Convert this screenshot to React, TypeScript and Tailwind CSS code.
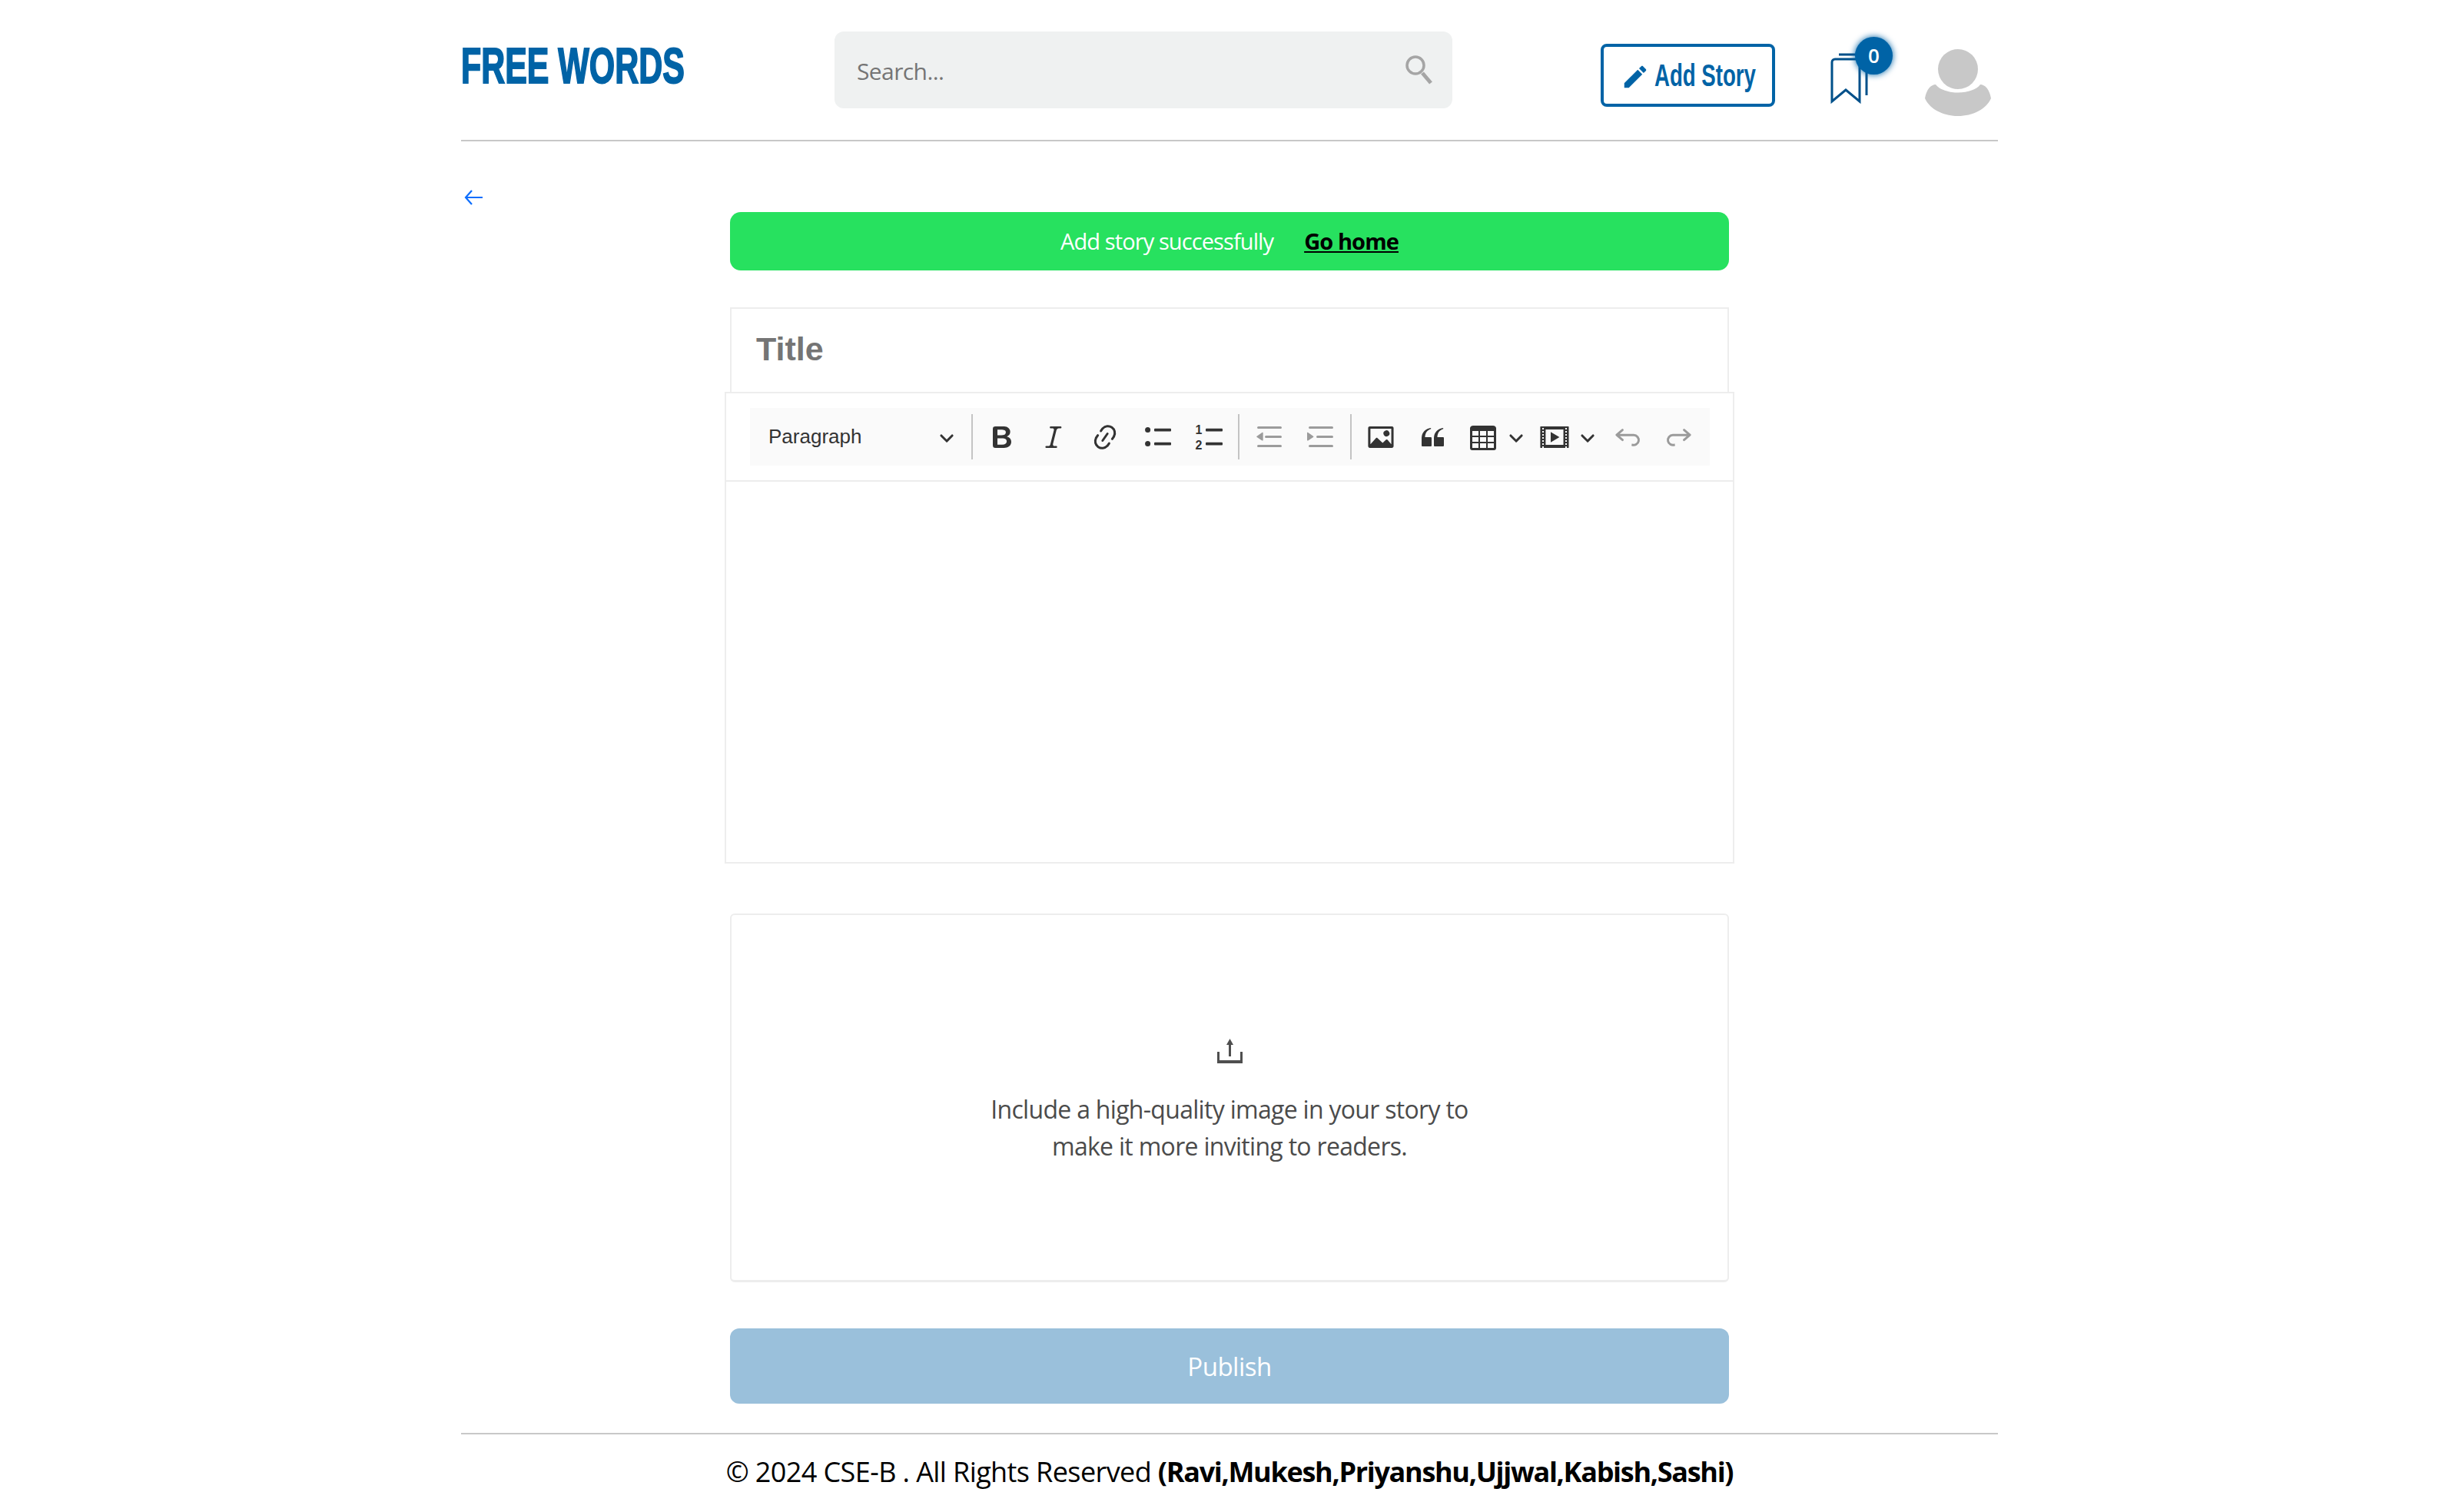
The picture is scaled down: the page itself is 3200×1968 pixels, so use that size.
import React from "react";

const BODY_FONT = "font-['Open_Sans',sans-serif]";

const Icon: React.FC<{ d: string; className?: string; children?: React.ReactNode }> = ({ d, className, children }) => (
  <svg viewBox="0 0 20 20" className={className ?? "w-[40px] h-[40px]"} fill="currentColor">
    <path d={d} fillRule="evenodd" />
    {children}
  </svg>
);

const Chevron: React.FC = () => (
  <svg viewBox="0 0 10 10" className="w-[20px] h-[20px]" fill="#333333">
    <path d="M.941 4.523a.75.75 0 1 1 1.06-1.06l3.006 3.005 3.005-3.005a.75.75 0 1 1 1.06 1.06l-3.549 3.55a.75.75 0 0 1-1.168-.136L.941 4.523z" />
  </svg>
);

const ToolButton: React.FC<{ children: React.ReactNode; muted?: boolean }> = ({ children, muted }) => (
  <button
    type="button"
    className={[
      "w-[67px] h-[60px] flex items-center justify-center shrink-0",
      muted ? "text-[#9b9b9b]" : "text-[#333333]",
    ].join(" ")}
  >
    {children}
  </button>
);

const Separator: React.FC<{ className?: string }> = ({ className }) => (
  <span className={["w-[2px] h-[59px] bg-[#c4c4c4] shrink-0", className ?? ""].join(" ")} />
);

const Toolbar: React.FC = () => (
  <div className="h-[117px] border-2 border-[#ededed] flex items-center pl-[31px]">
    <div className="w-[1249px] h-[75px] bg-[#fafafa] flex items-center">
      <div className="w-[288px] flex items-center justify-between pl-[24px] pr-[22px] text-[#333333] font-['Liberation_Sans',sans-serif] text-[26px]">
        <span>Paragraph</span>
        <Chevron />
      </div>
      <Separator className="mr-[4px]" />
      <ToolButton>
        <Icon d="M10.187 17H5.773c-.637 0-1.092-.138-1.364-.415-.273-.277-.409-.718-.409-1.323V4.738c0-.617.14-1.062.419-1.332.279-.27.73-.406 1.354-.406h4.68c.69 0 1.288.041 1.793.124.506.083.96.242 1.36.478.341.197.644.447.906.75a3.262 3.262 0 0 1 .808 2.162c0 1.401-.722 2.426-2.167 3.075C15.05 10.175 16 11.315 16 13.01a3.756 3.756 0 0 1-2.296 3.504 6.1 6.1 0 0 1-1.517.377c-.571.073-1.238.11-2 .11zm-.217-6.217H7v4.087h3.069c1.977 0 2.965-.69 2.965-2.072 0-.707-.256-1.22-.768-1.537-.512-.319-1.277-.478-2.296-.478zM7 5.13v3.619h2.606c.729 0 1.292-.067 1.69-.2a1.6 1.6 0 0 0 .91-.765c.165-.267.247-.566.247-.897 0-.707-.26-1.176-.778-1.409-.519-.232-1.31-.348-2.375-.348H7z" />
      </ToolButton>
      <ToolButton>
        <Icon d="m9.586 14.633.021.004c-.036.335.095.655.393.962.082.083.173.15.274.201h1.474a.6.6 0 1 1 0 1.2H5.304a.6.6 0 0 1 0-1.2h1.15c.474-.07.809-.182 1.005-.334.157-.122.291-.32.404-.597l2.416-9.55a1.053 1.053 0 0 0-.281-.823 1.12 1.12 0 0 0-.442-.296H8.15a.6.6 0 0 1 0-1.2h6.443a.6.6 0 1 1 0 1.2h-1.195c-.376.056-.65.155-.823.296-.215.175-.423.439-.623.79l-2.366 9.347z" />
      </ToolButton>
      <ToolButton>
        <Icon d="m11.077 15 .991-1.416a.75.75 0 1 1 1.229.86l-1.148 1.64a.748.748 0 0 1-.217.206 5.251 5.251 0 0 1-8.503-5.955.741.741 0 0 1 .12-.274l1.147-1.639a.75.75 0 1 1 1.228.86L4.933 10.7l.006.003a3.75 3.75 0 0 0 6.132 4.294l.006.004zm5.494-5.335a.748.748 0 0 1-.12.274l-1.147 1.639a.75.75 0 1 1-1.228-.86l.86-1.23a3.75 3.75 0 0 0-6.144-4.301l-.86 1.229a.75.75 0 0 1-1.229-.86l1.148-1.64a.748.748 0 0 1 .217-.206 5.251 5.251 0 0 1 8.503 5.955zm-4.563-2.532a.75.75 0 0 1 .184 1.045l-3.155 4.505a.75.75 0 1 1-1.229-.86l3.155-4.506a.75.75 0 0 1 1.045-.184z" />
      </ToolButton>
      <ToolButton>
        <svg viewBox="0 0 20 20" className="w-[40px] h-[40px]" fill="currentColor">
          <circle cx="4.3" cy="5.25" r="1.75" />
          <circle cx="4.3" cy="14.25" r="1.75" />
          <rect x="8.5" y="4.4" width="11" height="1.8" rx=".5" />
          <rect x="8.5" y="13.4" width="11" height="1.8" rx=".5" />
        </svg>
      </ToolButton>
      <ToolButton>
        <svg viewBox="0 0 20 20" className="w-[40px] h-[40px]" fill="currentColor">
          <text x="4" y="8.2" fontSize="8" fontWeight="700" textAnchor="middle" fontFamily="Liberation Sans, sans-serif">1</text>
          <text x="4" y="18" fontSize="8" fontWeight="700" textAnchor="middle" fontFamily="Liberation Sans, sans-serif">2</text>
          <rect x="8.5" y="4.4" width="11" height="1.8" rx=".5" />
          <rect x="8.5" y="13.4" width="11" height="1.8" rx=".5" />
        </svg>
      </ToolButton>
      <Separator className="ml-[6px] mr-[5px]" />
      <ToolButton muted>
        <Icon d="M2 3.75c0 .414.336.75.75.75h14.5a.75.75 0 1 0 0-1.5H2.75a.75.75 0 0 0-.75.75zm5 6c0 .414.336.75.75.75h9.5a.75.75 0 1 0 0-1.5h-9.5a.75.75 0 0 0-.75.75zM2.75 16.5h14.5a.75.75 0 1 0 0-1.5H2.75a.75.75 0 1 0 0 1.5zM5.2 6.95l-3.388 2.408a.4.4 0 0 0 .013.661l3.39 2.207a.4.4 0 0 0 .617-.334V7.275a.4.4 0 0 0-.632-.326z" />
      </ToolButton>
      <ToolButton muted>
        <Icon d="M2 3.75c0 .414.336.75.75.75h14.5a.75.75 0 1 0 0-1.5H2.75a.75.75 0 0 0-.75.75zm5 6c0 .414.336.75.75.75h9.5a.75.75 0 1 0 0-1.5h-9.5a.75.75 0 0 0-.75.75zM2.75 16.5h14.5a.75.75 0 1 0 0-1.5H2.75a.75.75 0 1 0 0 1.5zM1.632 6.95 5.02 9.358a.4.4 0 0 1-.013.661l-3.39 2.207A.4.4 0 0 1 1 11.892V7.275a.4.4 0 0 1 .632-.326z" />
      </ToolButton>
      <Separator className="ml-[5px] mr-[4px]" />
      <ToolButton>
        <Icon d="M6.91 10.54c.26-.23.64-.21.88.03l3.36 3.14 2.23-2.06a.64.64 0 0 1 .87 0l2.52 2.97V4.5H3.2v10.12l3.71-4.08zm10.27-7.51c.6 0 1.09.47 1.09 1.05v11.84c0 .59-.49 1.06-1.09 1.06H2.79c-.6 0-1.09-.47-1.09-1.06V4.08c0-.58.49-1.05 1.1-1.05h14.38zm-5.22 5.56a1.96 1.96 0 1 1 3.4-1.96 1.96 1.96 0 0 1-3.4 1.96z" />
      </ToolButton>
      <ToolButton>
        <Icon d="M3 10.423a6.5 6.5 0 0 1 6.056-6.408l.038.67C6.448 5.423 5.354 7.663 5.22 10H9c.552 0 .5.432.5.986v4.511c0 .554-.448.503-1 .503h-5c-.552 0-.5-.449-.5-1.003v-4.574zm8 0a6.5 6.5 0 0 1 6.056-6.408l.038.67c-2.646.739-3.74 2.979-3.873 5.315H17c.552 0 .5.432.5.986v4.511c0 .554-.448.503-1 .503h-5c-.552 0-.5-.449-.5-1.003v-4.574z" />
      </ToolButton>
      <div className="w-[92px] flex items-center pl-[13px] gap-[13px] text-[#333333] shrink-0">
        <Icon d="M3 6v3h4V6H3zm0 4v3h4v-3H3zm0 4v3h4v-3H3zm5 3h4v-3H8v3zm5 0h4v-3h-4v3zm4-4v-3h-4v3h4zm0-4V6h-4v3h4zm1.5 8a1.5 1.5 0 0 1-1.5 1.5H3A1.5 1.5 0 0 1 1.5 17V4c.222-.863 1.068-1.5 2-1.5h13c.932 0 1.778.637 2 1.5v13zM12 13v-3H8v3h4zm0-4V6H8v3h4z" />
        <Chevron />
      </div>
      <div className="w-[95px] flex items-center pl-[14px] gap-[13px] text-[#333333] shrink-0">
        <Icon d="M18.68 3.03c.6 0 .59-.03.59.55v12.84c0 .59.01.56-.59.56H1.29c-.6 0-.59.03-.59-.56V3.58c0-.58-.01-.55.6-.55h17.38zM15.77 15V5H4.2v10h11.57zM2 4v1h1V4H2zm0 2v1h1V6H2zm0 2v1h1V8H2zm0 2v1h1v-1H2zm0 2v1h1v-1H2zm0 2v1h1v-1H2zm0 2v1h1v-1H2zm15-12v1h1V4h-1zm0 2v1h1V6h-1zm0 2v1h1V8h-1zm0 2v1h1v-1h-1zm0 2v1h1v-1h-1zm0 2v1h1v-1h-1zm0 2v1h1v-1h-1zM7.5 6.6 13.2 10l-5.7 3.4z" />
        <Chevron />
      </div>
      <ToolButton muted>
        <Icon d="m5.042 9.367 2.189 1.837a.75.75 0 0 1-.965 1.149l-3.788-3.18a.747.747 0 0 1-.21-.284.75.75 0 0 1 .17-.945L6.23 4.762a.75.75 0 1 1 .964 1.15L4.863 7.867h8.917A.75.75 0 0 1 14 7.9a4 4 0 1 1-1.477 7.718l.344-1.489a2.5 2.5 0 1 0 1.094-4.73l.008-.032H5.042z" />
      </ToolButton>
      <ToolButton muted>
        <Icon d="m14.958 9.367-2.189 1.837a.75.75 0 0 0 .965 1.149l3.788-3.18a.747.747 0 0 0 .21-.284.75.75 0 0 0-.17-.945L13.77 4.762a.75.75 0 1 0-.964 1.15l2.331 1.955H6.22A.75.75 0 0 0 6 7.9a4 4 0 1 0 1.477 7.718l-.344-1.489A2.5 2.5 0 1 1 6.039 9.4l-.008-.032h8.927z" />
      </ToolButton>
    </div>
  </div>
);

const Header: React.FC = () => (
  <header className="h-[184px] border-b-2 border-[#c8c8c8] flex items-start">
    <a className="w-[486px] h-[170px] flex items-center shrink-0">
      <span className="font-['Liberation_Sans',sans-serif] font-bold text-[65px] leading-none whitespace-nowrap text-[#0063a6] [-webkit-text-stroke:2px_#0063a6] origin-left scale-x-[0.66]">
        FREE WORDS
      </span>
    </a>
    <div className="w-[804px] h-[100px] mt-[41px] bg-[#eff1f1] rounded-[12px] flex items-center justify-between pl-[29px] pr-[24px] shrink-0">
      <span className={`${BODY_FONT} text-[30px] text-[#757575] tracking-[-0.6px] pt-[2px]`}>Search...</span>
      <svg viewBox="0 0 38 38" className="w-[38px] h-[38px]" fill="none" stroke="#a5a5a5">
        <circle cx="14" cy="13" r="11" strokeWidth="3.5" />
        <path d="M23 23 34 36" strokeWidth="5" />
      </svg>
    </div>
    <button
      type="button"
      className="ml-[193px] mt-[57px] w-[227px] h-[82px] border-4 border-[#0063a6] rounded-[8px] flex items-center pl-[22px] gap-[6px] shrink-0 text-[#0063a6]"
    >
      <svg viewBox="0 0 24 24" className="w-[38px] h-[38px] mt-[4px] shrink-0" fill="currentColor">
        <path d="M3 17.25V21h3.75L17.81 9.94l-3.75-3.75L3 17.25zM20.71 7.04c.39-.39.39-1.02 0-1.41l-2.34-2.34c-.39-.39-1.02-.39-1.41 0l-1.83 1.83 3.75 3.75 1.83-1.83z" />
      </svg>
      <span className="font-['Liberation_Sans',sans-serif] font-bold text-[40px] leading-none whitespace-nowrap origin-left scale-x-[0.69]">
        Add Story
      </span>
    </button>
    <div className="relative ml-[71px] mt-[69px] w-[50px] h-[66px] shrink-0">
      <svg viewBox="0 0 50 66" className="w-[50px] h-[66px]" fill="none" stroke="#01508a" strokeWidth="3">
        <path d="M12 2h33a3 3 0 0 1 3 3v50" />
        <path d="M3 63V12a4 4 0 0 1 4-4h29a3 3 0 0 1 3 3v52L21 48z" fill="#ffffff" strokeLinejoin="miter" />
      </svg>
      <span className={`absolute left-[33px] top-[-21px] w-[49px] h-[49px] rounded-full bg-[#0063a6] shadow-[0_0_8px_#0063a6] flex items-center justify-center text-white font-semibold text-[26px] ${BODY_FONT}`}>
        0
      </span>
    </div>
    <svg viewBox="0 0 86 87" className="ml-[74px] mt-[64px] w-[86px] h-[87px] shrink-0" fill="#c8c8c8">
      <circle cx="43" cy="26" r="26" />
      <path d="M0 64C2 52 8 46 14 46 18 52 30 56.5 43 56.5 56 56.5 68 52 72 46 78 46 84 52 86 64 80 78 62 87 43 87 24 87 6 78 0 64Z" />
    </svg>
  </header>
);

const App: React.FC = () => {
  return (
    <div className={`min-h-screen bg-white w-[2000px] mx-auto ${BODY_FONT}`}>
      <Header />

      <main>
        <div className="pt-[63px] pl-[4px] h-[92px]">
          <svg viewBox="0 0 24 20" className="w-[24px] h-[20px]" fill="none" stroke="#0d6efd" strokeWidth="2.2">
            <path d="M24 10H3M10 1 2 10l8 9" />
          </svg>
        </div>

        <div className="w-[1300px] mx-auto">
          <div className="h-[76px] bg-[#27e15f] rounded-[14px] flex items-center justify-center text-[29px] tracking-[-0.9px]">
            <span className="text-white">Add story successfully</span>
            <a className="ml-[40px] font-bold underline text-black">Go home</a>
          </div>

          <div className="mt-[48px] h-[110px] border-2 border-b-0 border-[#ededed] flex items-center pl-[32px] pb-[3px] font-['Liberation_Sans',sans-serif] font-bold text-[43px] text-[#757575]">
            Title
          </div>

          <div className="-mx-[7px]">
            <Toolbar />
            <div className="h-[497px] border-2 border-t-0 border-[#ededed]" />
          </div>

          <div className="mt-[65px] h-[480px] border-2 border-b-[3px] border-[#ededed] rounded-[6px] flex flex-col items-center pt-[161px]">
            <svg viewBox="0 0 33 32" className="w-[33px] h-[32px]" fill="#4f4f4f">
              <path d="M16.5 0 21 8h-3v15h-3V8h-3z" />
              <path d="M0 17h3v11h27V17h3v15H0z" />
            </svg>
            <p className="mt-[36px] text-[32px] leading-[48px] text-[#4b4b4b] text-center tracking-[-0.7px]">
              Include a high-quality image in your story to
              <br />
              make it more inviting to readers.
            </p>
          </div>

          <button
            type="button"
            className="mt-[60px] w-full h-[98px] pt-[2px] bg-[#9ac0db] rounded-[12px] text-white text-[33px] tracking-[-0.5px] flex items-center justify-center"
          >
            Publish
          </button>
        </div>
      </main>

      <footer className="mt-[38px] border-t-2 border-[#c8c8c8] pt-[25px] text-center text-black text-[36px] leading-[48px] tracking-[-0.6px]">
        © 2024 CSE-B . All Rights Reserved <b className="font-bold tracking-[-1.3px]">(Ravi,Mukesh,Priyanshu,Ujjwal,Kabish,Sashi)</b>
      </footer>
    </div>
  );
};

export default App;
